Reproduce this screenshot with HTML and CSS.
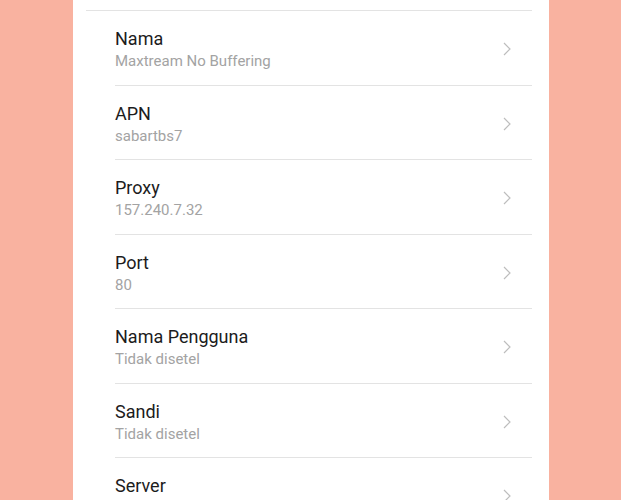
FILE: index.html
```html
<!DOCTYPE html>
<html lang="id">
<head>
<meta charset="utf-8">
<link rel="stylesheet" href="styles.css">
</head>
<body>
<div class="panel">
  <div class="top-divider"></div>
  <ul class="list">
    <li class="row"><div class="text"><div class="title">Nama</div><div class="sub">Maxtream No Buffering</div></div><svg class="chev" viewBox="0 0 8 14"><path d="M1 1 L7 7 L1 13"/></svg></li>
    <li class="row"><div class="text"><div class="title">APN</div><div class="sub">sabartbs7</div></div><svg class="chev" viewBox="0 0 8 14"><path d="M1 1 L7 7 L1 13"/></svg></li>
    <li class="row"><div class="text"><div class="title">Proxy</div><div class="sub">157.240.7.32</div></div><svg class="chev" viewBox="0 0 8 14"><path d="M1 1 L7 7 L1 13"/></svg></li>
    <li class="row"><div class="text"><div class="title">Port</div><div class="sub">80</div></div><svg class="chev" viewBox="0 0 8 14"><path d="M1 1 L7 7 L1 13"/></svg></li>
    <li class="row"><div class="text"><div class="title">Nama Pengguna</div><div class="sub">Tidak disetel</div></div><svg class="chev" viewBox="0 0 8 14"><path d="M1 1 L7 7 L1 13"/></svg></li>
    <li class="row"><div class="text"><div class="title">Sandi</div><div class="sub">Tidak disetel</div></div><svg class="chev" viewBox="0 0 8 14"><path d="M1 1 L7 7 L1 13"/></svg></li>
    <li class="row row-last"><div class="text"><div class="title">Server</div><div class="sub-space"></div></div><svg class="chev" viewBox="0 0 8 14"><path d="M1 1 L7 7 L1 13"/></svg></li>
  </ul>
</div>
</body>
</html>
```
FILE: styles.css
```css
html, body {
  margin: 0;
  padding: 0;
  height: 500px;
  overflow: hidden;
  background: #f9b2a0;
  font-family: Roboto, "Noto Sans", sans-serif;
}
.panel {
  width: 476px;
  margin-left: 73px;
  height: 500px;
  background: #ffffff;
  padding-top: 10px;
  box-sizing: border-box;
  overflow: hidden;
}
.top-divider {
  height: 1px;
  background: #e3e3e3;
  margin-left: 13px;
  margin-right: 17px;
}
.list {
  list-style: none;
  margin: 0 17px 0 42px;
  padding: 0;
}
.row {
  display: flex;
  align-items: center;
  padding: 17px 0 11.5px 0;
  border-bottom: 1px solid #e3e3e3;
}
.text {
  flex: 1;
}
.title {
  font-size: 18px;
  line-height: 22px;
  color: #1c1c1c;
}
.sub {
  font-size: 15px;
  line-height: 23px;
  color: #a3a3a3;
}
.sub-space {
  height: 23px;
}
.chev {
  width: 8px;
  height: 14px;
  margin-right: 21px;
  margin-top: -3px;
  fill: none;
  stroke: #bdbdbd;
  stroke-width: 1.2;
}
```
